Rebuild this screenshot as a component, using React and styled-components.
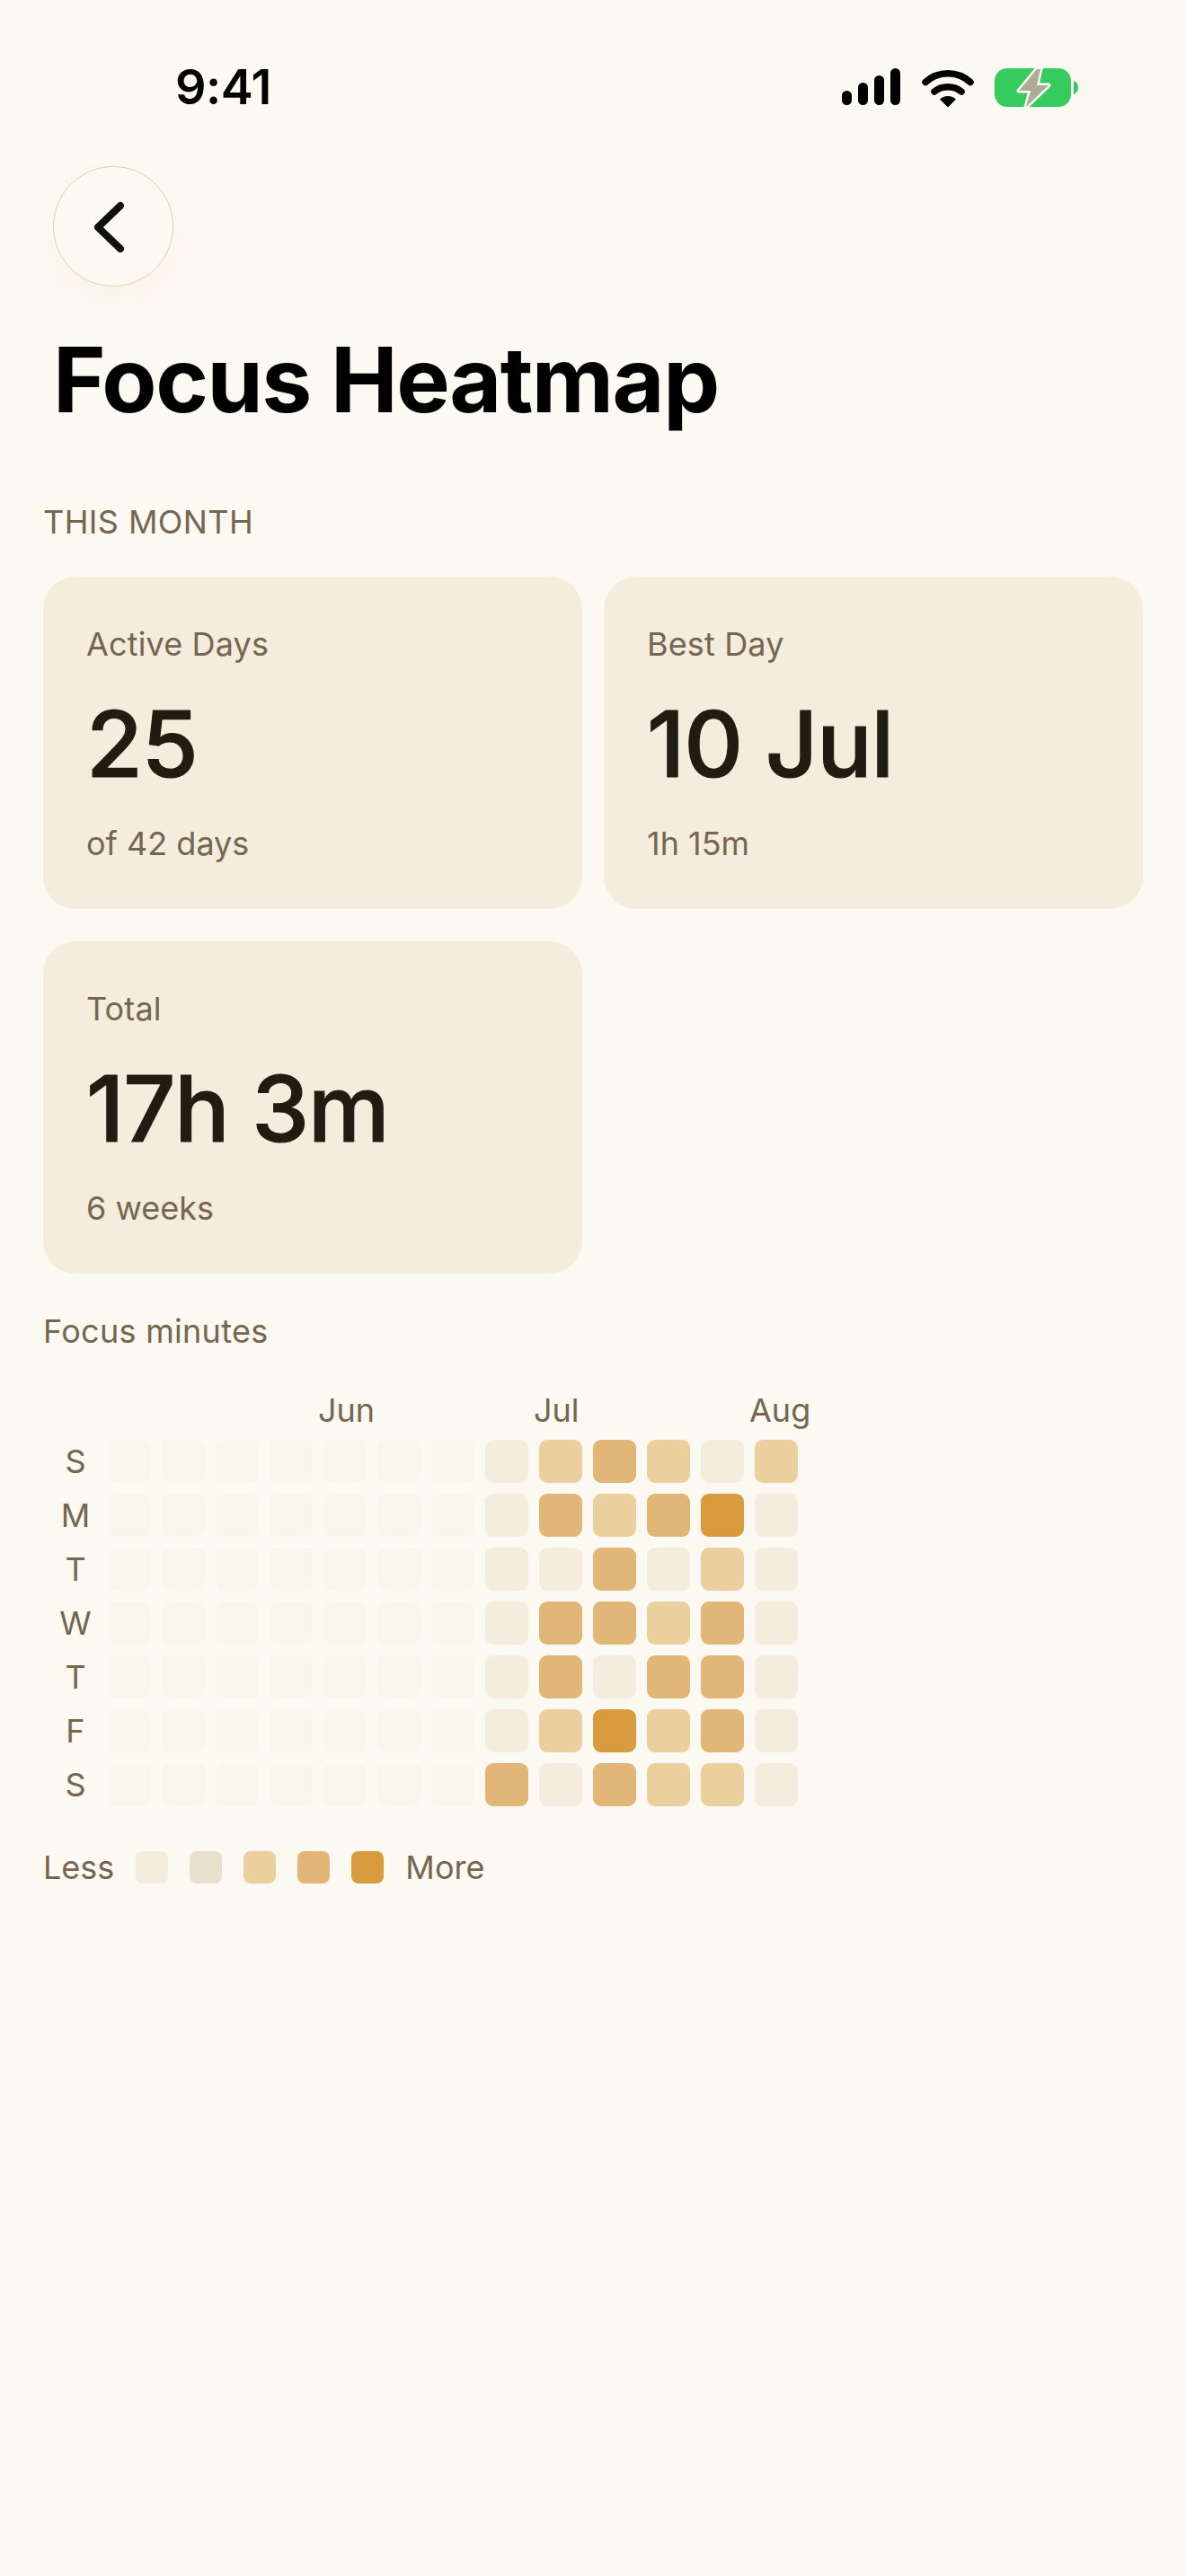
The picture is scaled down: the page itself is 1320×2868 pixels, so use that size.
import React from 'react';
import styled, { createGlobalStyle } from 'styled-components';

const GlobalStyle = createGlobalStyle`
  html, body {
    margin: 0;
    padding: 0;
    background: #fcf9f2;
  }
`;

const Page = styled.div`
  width: 1320px;
  height: 2868px;
  background: #fcf9f2;
  font-family: Inter, "Noto Sans", sans-serif;
  color: #756650;
  overflow: hidden;
`;

const StatusBar = styled.div`
  height: 185px;
  box-sizing: border-box;
  padding: 65px 119px 0 195px;
  display: flex;
  justify-content: space-between;
  align-items: flex-start;
`;

const Clock = styled.div`
  font-size: 54px;
  line-height: 64px;
  font-weight: 600;
  letter-spacing: -0.5px;
  color: #000;
`;

const StatusIcons = styled.div`
  display: flex;
  align-items: flex-start;
  gap: 23px;
  padding-top: 11px;

  svg {
    display: block;
  }
`;

const Content = styled.div`
  padding: 0 48px;
`;

const BackButton = styled.button`
  width: 134px;
  height: 134px;
  margin-left: 11px;
  padding: 0;
  border: 1.5px solid #d9cfb9;
  border-radius: 50%;
  background: #fcf9f2;
  box-shadow: 0 12px 36px rgba(120, 100, 60, 0.03);
  display: flex;
  align-items: center;
  justify-content: center;
`;

const Title = styled.h1`
  margin: 42px 0 0 11px;
  font-size: 100px;
  line-height: 124px;
  font-weight: 700;
  letter-spacing: -1.5px;
  color: #000;
`;

const SectionLabel = styled.div`
  margin-top: 74px;
  font-size: 36px;
  line-height: 44px;
  letter-spacing: 0.4px;
`;

const Cards = styled.div`
  margin-top: 39px;
  display: grid;
  grid-template-columns: 600px 600px;
  column-gap: 24px;
  row-gap: 36px;
`;

const Card = styled.div`
  height: 370px;
  box-sizing: border-box;
  padding: 53px 48px 0;
  border-radius: 36px;
  background: #f4eddd;
`;

const CardLabel = styled.div`
  font-size: 36px;
  line-height: 44px;
  letter-spacing: 0.15px;
`;

const CardValue = styled.div`
  margin-top: 26px;
  font-size: 102px;
  line-height: 126px;
  font-weight: 500;
  letter-spacing: -1.2px;
  -webkit-text-stroke: 1.2px #211c12;
  color: #211c12;
`;

const CardNote = styled.div`
  margin-top: 26px;
  font-size: 36px;
  line-height: 44px;
`;

const ChartTitle = styled.div`
  margin-top: 42px;
  font-size: 36px;
  line-height: 44px;
  letter-spacing: 0.3px;
`;

const MonthRow = styled.div`
  margin: 44px 0 11px 72px;
  display: grid;
  grid-template-columns: repeat(13, 48px);
  column-gap: 12px;
  height: 44px;
`;

const Month = styled.div`
  grid-column: ${(p) => p.$col + 1};
  margin-left: -6px;
  white-space: nowrap;
  font-size: 36px;
  line-height: 44px;
`;

const DayRows = styled.div`
  display: flex;
  flex-direction: column;
  gap: 12px;
`;

const DayRow = styled.div`
  display: flex;
  align-items: center;
`;

const DayLabel = styled.div`
  width: 72px;
  text-align: center;
  font-size: 36px;
  line-height: 48px;
`;

const Cells = styled.div`
  display: flex;
  gap: 12px;
`;

const levels = {
  faint: '#f9f6ed',
  0: '#f4eddd',
  1: '#e8dfcd',
  2: '#ebcf9f',
  3: '#e2b676',
  4: '#d89c3f',
};

const Cell = styled.div`
  width: 48px;
  height: 48px;
  border-radius: 9px;
  background: ${(p) => levels[p.$level]};
`;

const Legend = styled.div`
  margin-top: 46px;
  display: flex;
  align-items: center;
  gap: 24px;
  font-size: 36px;
  line-height: 44px;
`;

const Swatch = styled.div`
  width: 36px;
  height: 36px;
  border-radius: 8px;
  background: ${(p) => levels[p.$level]};
`;

const months = [
  { label: 'Jun', col: 4 },
  { label: 'Jul', col: 8 },
  { label: 'Aug', col: 12 },
];

const days = [
  { label: 'S', cells: [0, 2, 3, 2, 0, 2] },
  { label: 'M', cells: [0, 3, 2, 3, 4, 0] },
  { label: 'T', cells: [0, 0, 3, 0, 2, 0] },
  { label: 'W', cells: [0, 3, 3, 2, 3, 0] },
  { label: 'T', cells: [0, 3, 0, 3, 3, 0] },
  { label: 'F', cells: [0, 2, 4, 2, 3, 0] },
  { label: 'S', cells: [3, 0, 3, 2, 2, 0] },
];

const stats = [
  { label: 'Active Days', value: '25', note: 'of 42 days' },
  { label: 'Best Day', value: '10 Jul', note: '1h 15m' },
  { label: 'Total', value: '17h 3m', note: '6 weeks' },
];

function SignalIcon() {
  return (
    <svg width="66" height="42" viewBox="0 0 66 42" fill="#000">
      <rect x="0" y="25" width="11" height="16" rx="5.5" />
      <rect x="18" y="16" width="11" height="25" rx="5.5" />
      <rect x="36" y="8" width="11" height="33" rx="5.5" />
      <rect x="54" y="0" width="11" height="41" rx="5.5" />
    </svg>
  );
}

function WifiIcon() {
  return (
    <svg width="58" height="44" viewBox="0 0 58 44" fill="none">
      <path d="M4 15.5C18 2.5 40 2.5 54 15.5" stroke="#000" strokeWidth="7.5" strokeLinecap="round" />
      <path d="M14 26C22 19 36 19 44 26" stroke="#000" strokeWidth="7.5" strokeLinecap="round" />
      <path d="M20.5 34.5C25.5 30.5 32.5 30.5 37.5 34.5L29 43Z" fill="#000" stroke="#000" strokeWidth="1" strokeLinejoin="round" />
    </svg>
  );
}

function BatteryIcon() {
  return (
    <svg width="94" height="44" viewBox="0 0 94 44">
      <rect x="0" y="0" width="85" height="43" rx="14" fill="#36cb5f" />
      <path d="M88 14C91 15 93 18 93 21.5C93 25 91 28 88 29Z" fill="#36cb5f" />
      <path
        d="M47 1L27 25H40L35 43L60 19H47L51 1Z"
        fill="#b0aa98"
        stroke="#fcf9f2"
        strokeWidth="5"
        strokeLinejoin="round"
        paintOrder="stroke"
      />
    </svg>
  );
}

function App() {
  return (
    <Page>
      <GlobalStyle />
      <StatusBar>
        <Clock>9:41</Clock>
        <StatusIcons>
          <SignalIcon />
          <WifiIcon />
          <BatteryIcon />
        </StatusIcons>
      </StatusBar>
      <Content>
        <BackButton aria-label="Back">
          <svg width="44" height="66" viewBox="0 0 44 66" fill="none">
            <path d="M30 10L5 34L30 58" stroke="#111" strokeWidth="8" strokeLinecap="round" strokeLinejoin="round" />
          </svg>
        </BackButton>
        <Title>Focus Heatmap</Title>
        <SectionLabel>THIS MONTH</SectionLabel>
        <Cards>
          {stats.map((s) => (
            <Card key={s.label}>
              <CardLabel>{s.label}</CardLabel>
              <CardValue>{s.value}</CardValue>
              <CardNote>{s.note}</CardNote>
            </Card>
          ))}
        </Cards>
        <ChartTitle>Focus minutes</ChartTitle>
        <MonthRow>
          {months.map((m) => (
            <Month key={m.label} $col={m.col}>{m.label}</Month>
          ))}
        </MonthRow>
        <DayRows>
          {days.map((d, row) => (
            <DayRow key={row}>
              <DayLabel>{d.label}</DayLabel>
              <Cells>
                {Array.from({ length: 7 }).map((_, i) => (
                  <Cell key={i} $level="faint" />
                ))}
                {d.cells.map((c, i) => (
                  <Cell key={`c${i}`} $level={c} />
                ))}
              </Cells>
            </DayRow>
          ))}
        </DayRows>
        <Legend>
          <span>Less</span>
          {[0, 1, 2, 3, 4].map((l) => (
            <Swatch key={l} $level={l} />
          ))}
          <span>More</span>
        </Legend>
      </Content>
    </Page>
  );
}

export default App;
